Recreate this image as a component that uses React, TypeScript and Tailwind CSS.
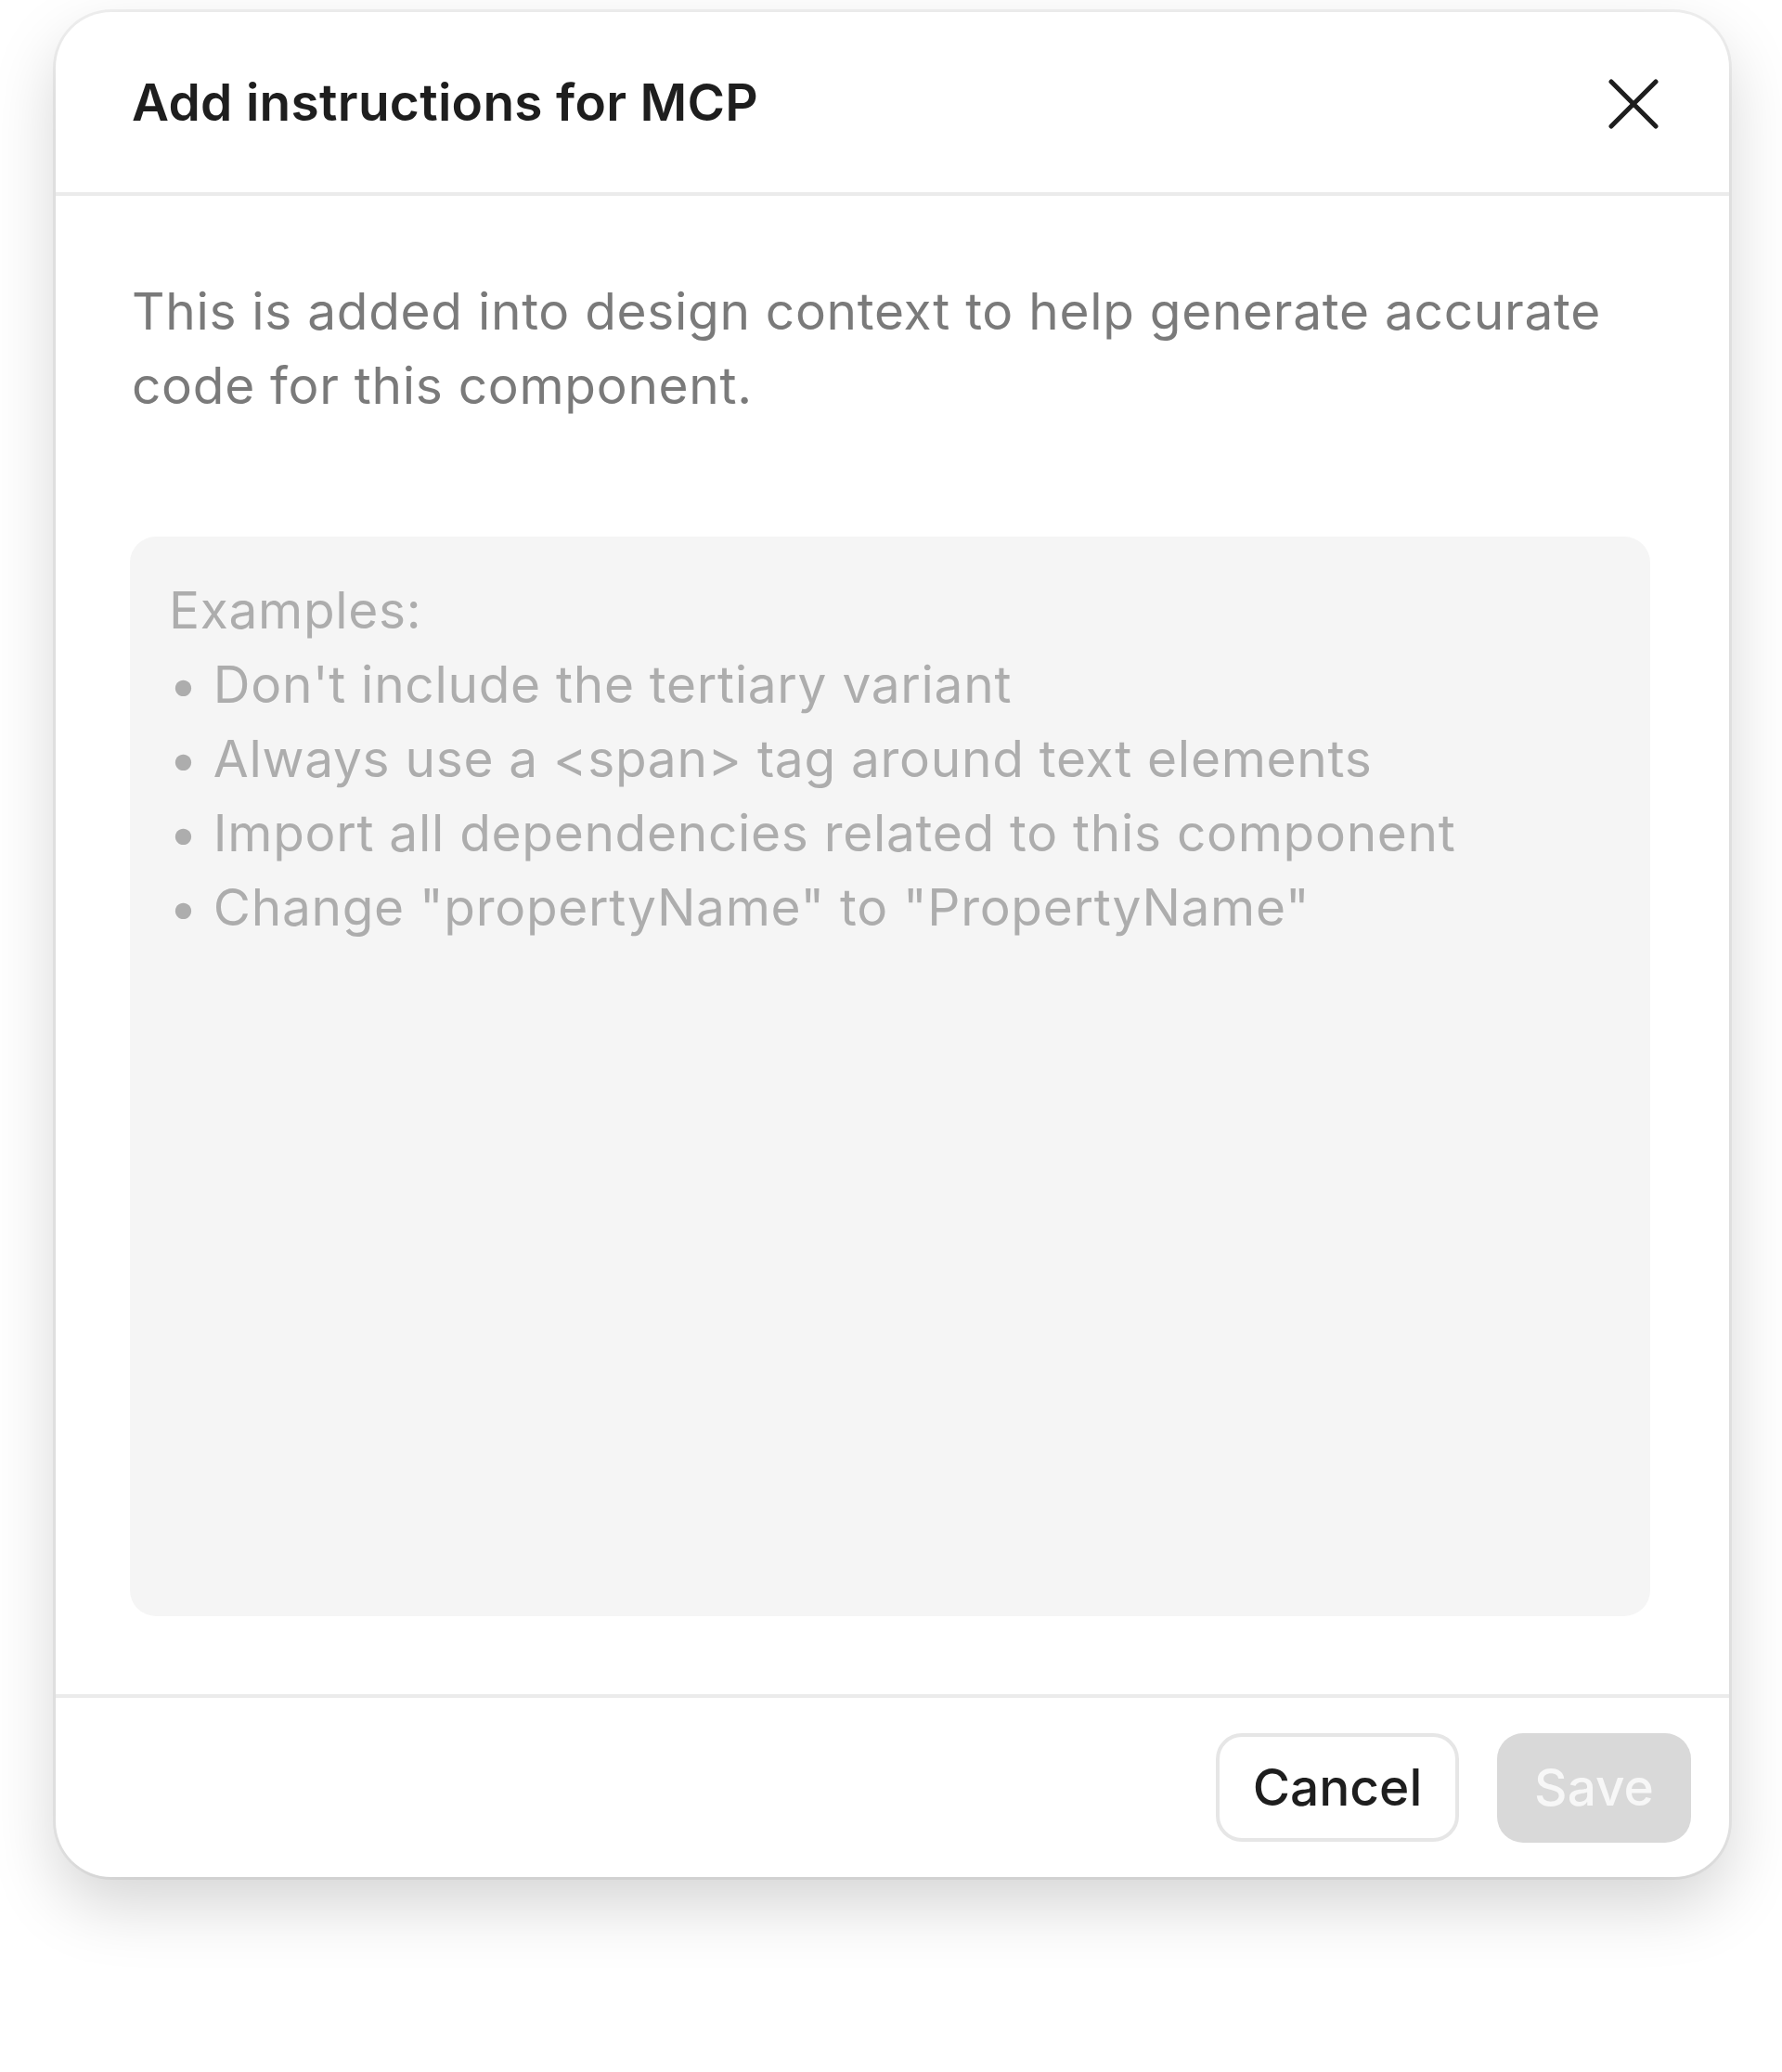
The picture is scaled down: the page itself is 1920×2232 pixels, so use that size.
import React from "react";

export default function App() {
  const font = { fontFamily: "Inter, 'Noto Sans', sans-serif" };
  return (
    <div className="min-h-[2232px] w-[1920px] bg-white pl-[60px] pt-[13px]" style={font}>
      <div className="flex h-[2009px] w-[1803px] flex-col rounded-[60px] bg-white shadow-[0_0_0_3px_rgba(0,0,0,0.05),0_30px_70px_rgba(0,0,0,0.17)]">
        <div className="flex h-[198px] shrink-0 items-center justify-between border-b-[4px] border-[#ebebeb] pl-[82px] pr-[76px]">
          <span className="text-[55px] font-semibold leading-[80px] tracking-[0.3px] text-[#1e1e1e]">Add instructions for MCP</span>
          <svg width="54" height="54" viewBox="0 0 54 54" fill="none" stroke="#1e1e1e" strokeWidth="5" strokeLinecap="round" className="mt-[4px]">
            <path d="M3 3 L51 51 M51 3 L3 51" />
          </svg>
        </div>
        <div className="flex h-[1614px] shrink-0 flex-col pl-[80px] pr-[85px] pt-[84px]">
          <p className="pl-[2px] text-[55px] leading-[80px] tracking-[0.7px] text-[#7a7a7a]">
            This is added into design context to help generate accurate code for this component.
          </p>
          <div className="mt-[123px] h-[1163px] rounded-[28px] bg-[#f5f5f5] pl-[42px] pt-[39px] text-[55px] leading-[80px] tracking-[0.7px] text-[#adadad]">
            <div>Examples:</div>
            <div>• Don't include the tertiary variant</div>
            <div>• Always use a &lt;span&gt; tag around text elements</div>
            <div>• Import all dependencies related to this component</div>
            <div>• Change "propertyName" to "PropertyName"</div>
          </div>
        </div>
        <div className="flex flex-1 items-center justify-end gap-[41px] border-t-[4px] border-[#ebebeb] pr-[41px]">
          <button className="flex h-[117px] w-[262px] items-center justify-center rounded-[28px] border-[4px] border-[#e6e6e6] bg-white text-[55px] font-medium text-[#1e1e1e]">
            Cancel
          </button>
          <button className="flex h-[118px] w-[209px] items-center justify-center rounded-[28px] bg-[#d9d9d9] text-[55px] font-medium text-[#f7f7f7]">
            Save
          </button>
        </div>
      </div>
    </div>
  );
}
